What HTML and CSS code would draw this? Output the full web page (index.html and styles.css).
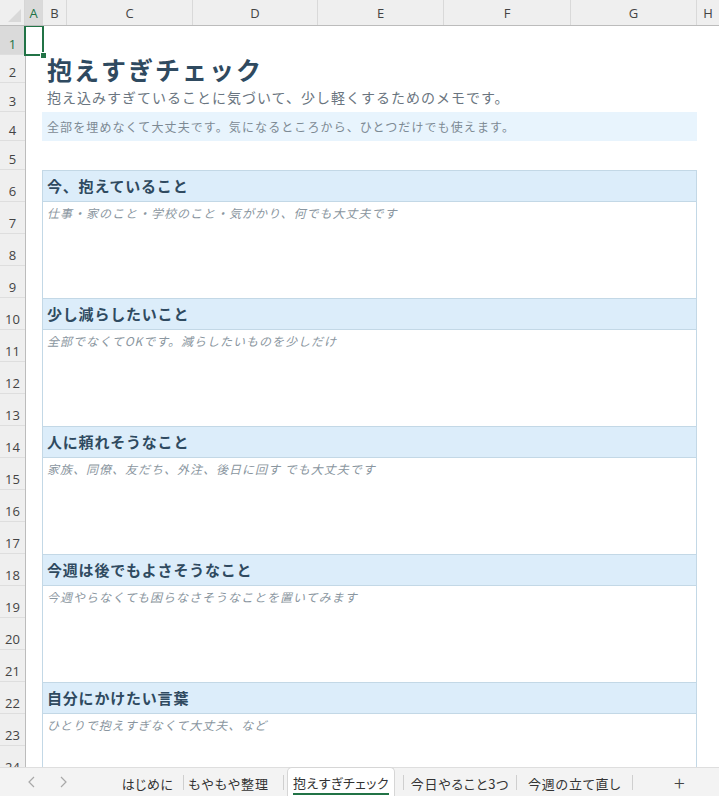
FILE: index.html
```html
<!DOCTYPE html>
<html lang="ja">
<head>
<meta charset="utf-8">
<title>抱えすぎチェック</title>
<link rel="stylesheet" href="styles.css">
</head>
<body>
<div class="app">
  <div class="colhead">
    <div class="corner"><div class="tri"></div></div>
    <div class="ch ch-a sel">A</div>
    <div class="ch ch-b">B</div>
    <div class="ch ch-c">C</div>
    <div class="ch ch-d">D</div>
    <div class="ch ch-e">E</div>
    <div class="ch ch-f">F</div>
    <div class="ch ch-g">G</div>
    <div class="ch ch-h">H</div>
  </div>
  <div class="sheet">
    <div class="rowhead">
      <div class="rh r1 sel">1</div>
      <div class="rh r2">2</div>
      <div class="rh r3">3</div>
      <div class="rh r4">4</div>
      <div class="rh r5">5</div>
      <div class="rh">6</div>
      <div class="rh">7</div>
      <div class="rh">8</div>
      <div class="rh">9</div>
      <div class="rh">10</div>
      <div class="rh">11</div>
      <div class="rh">12</div>
      <div class="rh">13</div>
      <div class="rh">14</div>
      <div class="rh">15</div>
      <div class="rh">16</div>
      <div class="rh">17</div>
      <div class="rh">18</div>
      <div class="rh">19</div>
      <div class="rh">20</div>
      <div class="rh">21</div>
      <div class="rh">22</div>
      <div class="rh">23</div>
      <div class="rh">24</div>
    </div>
    <div class="content">
      <div class="selcell"><span class="handle"></span></div>
      <div class="row1"></div>
      <div class="title">抱えすぎチェック</div>
      <div class="subtitle">抱え込みすぎていることに気づいて、少し軽くするためのメモです。</div>
      <div class="note">全部を埋めなくて大丈夫です。気になるところから、ひとつだけでも使えます。</div>
      <div class="row5"></div>
      <div class="box">
        <div class="section">
          <div class="band">今、抱えていること</div>
          <div class="body">仕事・家のこと・学校のこと・気がかり、何でも大丈夫です</div>
        </div>
        <div class="section">
          <div class="band">少し減らしたいこと</div>
          <div class="body">全部でなくてOKです。減らしたいものを少しだけ</div>
        </div>
        <div class="section">
          <div class="band">人に頼れそうなこと</div>
          <div class="body">家族、同僚、友だち、外注、後日に回す でも大丈夫です</div>
        </div>
        <div class="section">
          <div class="band">今週は後でもよさそうなこと</div>
          <div class="body">今週やらなくても困らなさそうなことを置いてみます</div>
        </div>
        <div class="section">
          <div class="band">自分にかけたい言葉</div>
          <div class="body">ひとりで抱えすぎなくて大丈夫、など</div>
        </div>
      </div>
    </div>
  </div>
  <div class="tabbar">
    <div class="nav">
      <svg width="10" height="12" viewBox="0 0 10 12"><path d="M7 1 L2 6 L7 11" fill="none" stroke="#a8a8a8" stroke-width="1.2"/></svg>
      <svg width="10" height="12" viewBox="0 0 10 12"><path d="M3 1 L8 6 L3 11" fill="none" stroke="#a8a8a8" stroke-width="1.2"/></svg>
    </div>
    <div class="tabs">
      <div class="tab t1">はじめに</div>
      <div class="sep"></div>
      <div class="tab t2">もやもや整理</div>
      <div class="sep"></div>
      <div class="tab active"><span>抱えすぎチェック</span></div>
      <div class="sep"></div>
      <div class="tab t4">今日やること3つ</div>
      <div class="sep"></div>
      <div class="tab t5">今週の立て直し</div>
      <div class="sep"></div>
      <div class="tab plus">+</div>
    </div>
  </div>
</div>
</body>
</html>
```
FILE: styles.css
```css
* { box-sizing: border-box; }
html, body { margin: 0; padding: 0; }
body {
  width: 719px;
  height: 796px;
  overflow: hidden;
  background: #ffffff;
  font-family: "Noto Sans CJK JP", "Noto Sans", sans-serif;
}
.app {
  display: flex;
  flex-direction: column;
  height: 796px;
}
.colhead {
  display: flex;
  height: 26px;
  flex: none;
  background: #efefef;
  border-bottom: 1px solid #bcbcbc;
  font-family: "Open Sans", "Liberation Sans", sans-serif;
  font-size: 13px;
  color: #444;
}
.corner {
  width: 25px;
  flex: none;
  position: relative;
  border-right: 1px solid #d6d6d6;
}
.tri {
  position: absolute;
  right: 3px;
  bottom: 3px;
  width: 0;
  height: 0;
  border-left: 13px solid transparent;
  border-bottom: 13px solid #d9d9d9;
}
.ch {
  flex: none;
  display: flex;
  align-items: center;
  justify-content: center;
  border-right: 1px solid #d9d9d9;
  line-height: 1;
  padding-top: 2px;
}
.ch.sel { background: #dadada; color: #217346; }
.ch-a { width: 18px; }
.ch-b { width: 24px; }
.ch-c { width: 126px; }
.ch-d { width: 125px; }
.ch-e { width: 126px; }
.ch-f { width: 127px; }
.ch-g { width: 126px; }
.ch-h { flex: 1; border-right: none; }

.sheet {
  display: flex;
  flex: 1;
  overflow: hidden;
}
.rowhead {
  width: 26px;
  flex: none;
  background: #efefef;
  border-right: 1px solid #bcbcbc;
  font-family: "Open Sans", "Liberation Sans", sans-serif;
  font-size: 13px;
  color: #444;
}
.rh {
  height: 32px;
  display: flex;
  align-items: flex-end;
  justify-content: center;
  border-bottom: 1px solid #dedede;
  padding-bottom: 1px;
  line-height: 18px;
}
.rh.r1 { height: 29px; }
.rh.r2 { height: 28px; }
.rh.r3 { height: 29px; }
.rh.r4 { height: 29px; }
.rh.r5 { height: 29px; }
.rh.sel { background: #dadada; color: #217346; }

.content {
  flex: 1;
  position: relative;
  padding-left: 16px;
}
.selcell {
  position: absolute;
  left: -2px;
  top: -1px;
  width: 20px;
  height: 31px;
  border: 2px solid #217346;
}
.handle {
  position: absolute;
  right: -5px;
  bottom: -5px;
  width: 7px;
  height: 7px;
  background: #217346;
  border: 1px solid #fff;
}
.row1 { height: 29px; }
.title {
  height: 28px;
  width: 655px;
  padding-left: 5px;
  font-size: 25px;
  line-height: 28px;
  font-weight: 700;
  letter-spacing: 2px;
  color: #2f4a60;
}
.subtitle {
  height: 29px;
  width: 655px;
  padding-left: 5px;
  font-size: 14px;
  line-height: 29px;
  letter-spacing: 1px;
  color: #6a7580;
}
.note {
  height: 29px;
  width: 655px;
  padding-left: 5px;
  font-size: 12px;
  line-height: 29px;
  letter-spacing: 1.1px;
  color: #7d8a94;
  background: #e8f4fd;
}
.row5 { height: 29px; }
.box {
  width: 655px;
  border-left: 1px solid #c3d8e6;
  border-right: 1px solid #c3d8e6;
}
.section { height: 128px; }
.band {
  height: 32px;
  border-top: 1px solid #c3d8e6;
  border-bottom: 1px solid #c3d8e6;
  background: #dcedfa;
  padding-left: 4px;
  font-size: 15px;
  line-height: 29px;
  font-weight: 700;
  letter-spacing: 0.8px;
  color: #2f4a60;
}
.body {
  height: 96px;
  padding-left: 4px;
  padding-top: 2px;
  font-size: 12px;
  line-height: 17px;
  font-style: italic;
  letter-spacing: 1px;
  color: #8a96a0;
}

.tabbar {
  height: 29px;
  flex: none;
  display: flex;
  align-items: stretch;
  background: #f3f3f3;
  border-top: 1px solid #dedede;
  font-size: 13px;
  color: #333;
}
.nav {
  width: 110px;
  flex: none;
  display: flex;
  align-items: center;
  padding-left: 27px;
  gap: 21px;
}
.tabs {
  display: flex;
  align-items: stretch;
  flex: 1;
}
.tab {
  flex: none;
  display: flex;
  align-items: center;
  justify-content: center;
  padding-top: 2px;
  white-space: nowrap;
  font-feature-settings: "palt";
  letter-spacing: 0.4px;
}
.sep {
  flex: none;
  width: 1px;
  margin: 7px 0 6px;
  background: #cfcfcf;
}
.t1 { width: 73px; padding-left: 2px; }
.t2 { width: 99px; padding-right: 10px; letter-spacing: 1px; }
.tab.active {
  width: 108px;
  margin: -1px 8px 0 3px;
  background: #ffffff;
  border-radius: 5px 5px 0 0;
  border: 1px solid #d6d6d6;
  border-bottom: none;
  padding-top: 0;
}
.tab.active span {
  border-bottom: 2px solid #217346;
  line-height: 18px;
  padding-bottom: 1px;
  margin-top: 5px;
}
.t4 { width: 112px; letter-spacing: 0.8px; }
.t5 { width: 115px; letter-spacing: 0.8px; }
.tab.plus {
  padding: 0 0 0 41px;
  font-size: 20px;
  font-weight: 300;
  color: #444;
}
```
